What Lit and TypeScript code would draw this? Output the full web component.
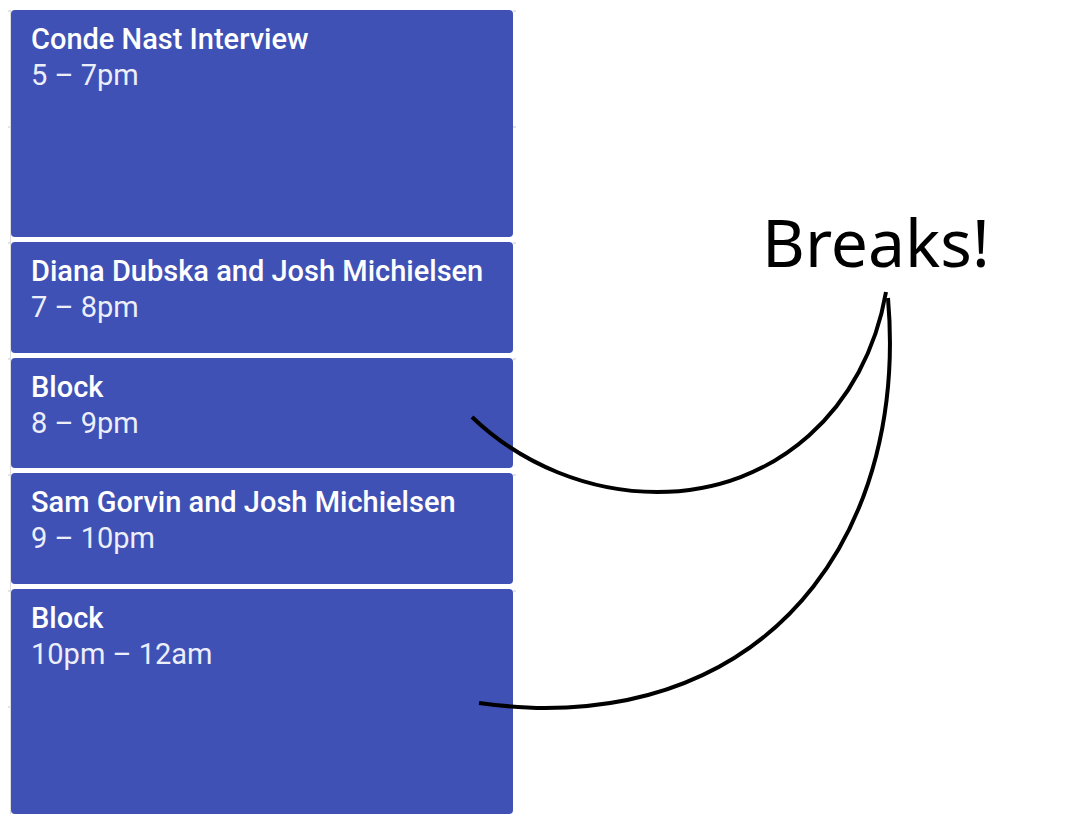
import { LitElement, html, css } from "lit";
import { customElement } from "lit/decorators.js";
import { styleMap } from "lit/directives/style-map.js";

interface CalendarEvent {
  title: string;
  time: string;
  height: number;
}

const EVENTS: CalendarEvent[] = [
  { title: "Conde Nast Interview", time: "5 – 7pm", height: 227 },
  { title: "Diana Dubska and Josh Michielsen", time: "7 – 8pm", height: 111 },
  { title: "Block", time: "8 – 9pm", height: 110 },
  { title: "Sam Gorvin and Josh Michielsen", time: "9 – 10pm", height: 111 },
  { title: "Block", time: "10pm – 12am", height: 225 },
];

@customElement("app-root")
export class AppRoot extends LitElement {
  static styles = css`
    :host {
      display: block;
      position: relative;
      background: #fff;
      min-height: 100vh;
      box-sizing: border-box;
      padding: 10px 8px 12px;
    }
    .layout {
      display: grid;
      grid-template-columns: 508px 1fr;
    }
    .day {
      box-sizing: border-box;
      padding: 0 3px;
      background:
        linear-gradient(#dedede, #dedede) 2px 0 / 1px 100% no-repeat,
        repeating-linear-gradient(#e4e4e4 0 2px, transparent 2px 116px);
    }
    .events {
      list-style: none;
      margin: 0;
      padding: 0;
      display: flex;
      flex-direction: column;
      gap: 5px;
      background: #fff;
    }
    .event {
      box-sizing: border-box;
      padding: 11px 20px;
      border-radius: 4px;
      background: #3f51b5;
      color: #fff;
      font-family: Roboto, sans-serif;
      font-size: 29px;
      line-height: 36px;
      white-space: nowrap;
    }
    .title {
      margin: 0;
      font-size: inherit;
      font-weight: 500;
    }
    .time {
      margin: 0;
      color: #eceefa;
    }
    .note {
      margin: 187px 0 0;
      padding-left: 246px;
      font-family: "Noto Sans", sans-serif;
      font-size: 66px;
      font-weight: 400;
      line-height: 88px;
      color: #000;
    }
    .arrows {
      position: absolute;
      left: 0;
      top: 0;
      fill: none;
      stroke: #000;
      stroke-width: 4;
      pointer-events: none;
    }
  `;

  render() {
    return html`
      <main class="layout">
        <section class="day" aria-label="Schedule">
          <ul class="events">
            ${EVENTS.map(
              (e) => html`
                <li class="event" style=${styleMap({ height: `${e.height}px` })}>
                  <h2 class="title">${e.title}</h2>
                  <p class="time">${e.time}</p>
                </li>
              `,
            )}
          </ul>
        </section>
        <p class="note">Breaks!</p>
      </main>
      <svg class="arrows" width="900" height="720" viewBox="0 0 900 720" aria-hidden="true">
        <path d="M472 417C522 465 590 492 657 492C777 492 866 408 886 292" />
        <path d="M479 703C502 706 523 708 545 708C785 708 907 520 888 298" />
      </svg>
    `;
  }
}
